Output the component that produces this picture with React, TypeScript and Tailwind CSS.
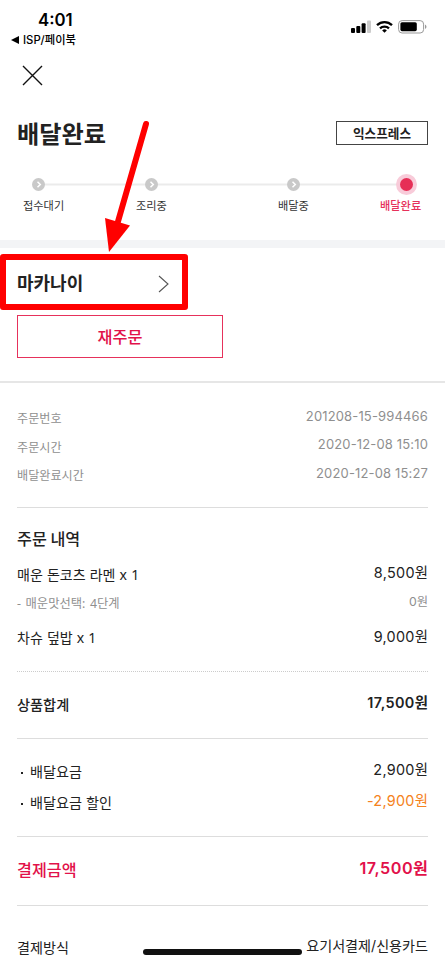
import type { ReactNode } from "react";

const KR = "font-['Noto_Sans_CJK_KR',sans-serif]";
const NUM = "font-['Inter','Noto_Sans_CJK_KR',sans-serif]";
const MENU = "pt-[2px] font-['Noto_Sans','Noto_Sans_CJK_KR',sans-serif]";

const ORDER_INFO = [
  { label: "주문번호", value: "201208-15-994466", height: "h-[29px]" },
  { label: "주문시간", value: "2020-12-08 15:10", height: "h-[28px]" },
  { label: "배달완료시간", value: "2020-12-08 15:27", height: "h-[29px]" },
];

export default function App() {
  return (
    <div className={`relative h-[963px] w-[445px] overflow-hidden bg-white text-[#222] ${KR}`}>
      <StatusBar />

      <header className="px-[17px]">
        <button className="mt-[15px] ml-[5px] block" aria-label="닫기">
          <svg width="21" height="21" viewBox="0 0 21 21" fill="none" stroke="#111" strokeWidth="1.4">
            <path d="M1 1l19 19M20 1L1 20" />
          </svg>
        </button>
        <div className="mt-[29px] flex h-[36px] items-center justify-between">
          <h1 className="text-[24.2px] leading-none font-bold">배달완료</h1>
          <span className="flex h-[24px] w-[92px] items-center justify-center border border-[#444] text-[12.6px] leading-none font-bold">
            익스프레스
          </span>
        </div>
      </header>

      <Stepper />

      <div className="h-[8px] bg-[#f3f4f6]" />

      <section className="h-[133px]">
        <div className="h-[62px] pt-[6px]">
          <button className="flex h-[56px] w-[188px] items-center justify-between rounded-[3px] border-6 border-[#ff0000] pr-[13px] pl-[11px]">
            <span className="text-[18px] leading-none font-bold">마카나이</span>
            <svg width="11" height="18" viewBox="0 0 11 18" fill="none" stroke="#555" strokeWidth="1.1" className="mt-[3px]">
              <path d="M1 1l9 8-9 8" />
            </svg>
          </button>
        </div>
        <button className="mt-[5px] ml-[17px] block h-[43px] w-[206px] border border-[#e6315b] text-[16.3px] leading-none font-medium text-[#e2114a]">
          재주문
        </button>
      </section>

      <div className="h-[2px] bg-[#e6e6e6]" />

      <main className="px-[17px]">
        <section className="border-b border-[#ddd] pt-[20px] pb-[18px]">
          {ORDER_INFO.map((row) => (
            <Row
              key={row.label}
              className={`${row.height} text-[#8f8f8f]`}
              label={<span className="pt-[2px] text-[12.1px]">{row.label}</span>}
              value={<span className="pb-[2px] text-[13px] tracking-[0.15px]">{row.value}</span>}
            />
          ))}
        </section>

        <section>
          <h2 className="flex h-[61px] items-center text-[16.2px] leading-none font-medium">주문 내역</h2>
          <Row
            className="h-[10px]"
            label={<span className={`text-[14px] [word-spacing:0.5px] ${MENU}`}>매운 돈코츠 라멘 x 1</span>}
            value={<Price>8,500원</Price>}
          />
          <Row
            className="h-[48px] text-[#8f8f8f]"
            label={<span className={`text-[12.3px] [word-spacing:1.4px] ${MENU}`}>- 매운맛선택: 4단계</span>}
            value={<span className="pb-[1px] text-[12.3px]">0원</span>}
          />
          <Row
            className="h-[20px]"
            label={<span className={`text-[14px] [word-spacing:0.5px] ${MENU}`}>차슈 덮밥 x 1</span>}
            value={<Price className="pt-[2px]">9,000원</Price>}
          />
        </section>

        <div className="mt-[24px] border-b border-dotted border-[#ccc]" />

        <section className="border-b border-[#ddd] pb-[2px]">
          <Row
            className="h-[64px] font-medium"
            label={<span className="text-[14.2px]">상품합계</span>}
            value={<span className="-mr-[0.4px] text-[14.4px] font-semibold tracking-[0.4px]">17,500원</span>}
          />
        </section>

        <section className="border-b border-[#ddd] pt-[16px] pb-[19px]">
          <Row className="h-[32px]" label={<Bullet>배달요금</Bullet>} value={<Price>2,900원</Price>} />
          <Row
            className="h-[30px]"
            label={<Bullet>배달요금 할인</Bullet>}
            value={<Price className="pb-[1px] text-[#f58220]">-2,900원</Price>}
          />
        </section>

        <section className="border-b border-[#ddd] pb-[3px]">
          <Row
            className="h-[65px] text-[#e2114a]"
            label={<span className="text-[16.2px] font-medium">결제금액</span>}
            value={<span className="-mr-[0.5px] pb-[1px] text-[16.2px] font-semibold tracking-[0.5px]">17,500원</span>}
          />
        </section>

        <Row
          className="mt-[23px] h-[36px]"
          label={<span className="text-[14.1px]">결제방식</span>}
          value={<span className="text-[14.1px]">요기서결제/신용카드</span>}
        />
      </main>

      {/* annotation arrow pointing at the store name */}
      <svg className="absolute top-0 left-0" width="200" height="260" viewBox="0 0 200 260">
        <path d="M146 124L117 225" stroke="#ff0000" strokeWidth="6" strokeLinecap="round" />
        <path d="M105 218L130 225.5L109 252Z" fill="#ff0000" />
      </svg>

      <div className="absolute top-[949px] left-[143px] h-[6px] w-[159px] rounded-full bg-[#111]" />
    </div>
  );
}

function Row({ label, value, className }: { label: ReactNode; value: ReactNode; className: string }) {
  return (
    <div className={`flex items-center justify-between leading-none whitespace-nowrap ${className}`}>
      <div className="flex items-center">{label}</div>
      <div className={`mb-[1px] flex items-center ${NUM}`}>{value}</div>
    </div>
  );
}

function Price({ children, className = "" }: { children: ReactNode; className?: string }) {
  return <span className={`-mr-[0.3px] text-[14.4px] tracking-[0.3px] ${className}`}>{children}</span>;
}

function Bullet({ children }: { children: ReactNode }) {
  return (
    <span className="flex items-center text-[14.1px]">
      <i className="mt-[3px] mr-[7px] ml-[4px] h-[2px] w-[2px] bg-[#222]" />
      <span className="[word-spacing:1px]">{children}</span>
    </span>
  );
}

function StatusBar() {
  return (
    <div className="flex h-[50px] justify-between font-['Inter','Noto_Sans_CJK_KR',sans-serif] text-black">
      <div className="pt-[12px] pl-[11px]">
        <div className="pl-[27px] text-[16.8px] leading-[16px] font-semibold">4:01</div>
        <div className="mt-[5px] flex items-center text-[11.3px] leading-[14px] font-medium">
          <svg width="8" height="8" viewBox="0 0 8 8" className="mr-[4px]">
            <path d="M0 4l8-4v8z" />
          </svg>
          ISP/페이북
        </div>
      </div>
      <div className="flex items-start gap-[5px] pt-[20px] pr-[18px]">
        <svg width="20" height="13" viewBox="0 0 20 13">
          <rect x="0" y="8" width="4" height="5" rx="1" />
          <rect x="5.3" y="6" width="4" height="7" rx="1" />
          <rect x="10.6" y="3.2" width="4" height="9.8" rx="1" />
          <rect x="16" y="0.5" width="4" height="12.5" rx="1" fill="#ccc" />
        </svg>
        <svg width="17" height="13" viewBox="0 0 17 13" fill="none" stroke="#000" strokeWidth="2.3">
          <path d="M1 5.2a10.8 10.8 0 0 1 15 0" />
          <path d="M4 8.4a6.5 6.5 0 0 1 9 0" />
          <path d="M8.5 12.8L6.2 10.4a3.4 3.4 0 0 1 4.6 0z" fill="#000" stroke="none" />
        </svg>
        <svg width="29" height="14" viewBox="0 0 29 14">
          <rect x="0.6" y="0.6" width="25" height="12.4" rx="3.5" fill="none" stroke="#999" />
          <rect x="2.4" y="2.2" width="16.4" height="9" rx="1.6" />
          <path d="M27 4.6c2 .8 2 3.6 0 4.4z" fill="#999" />
        </svg>
      </div>
    </div>
  );
}

function Stepper() {
  return (
    <div className="h-[89px] pt-[17px]">
      <svg width="445" height="30" viewBox="0 0 445 30" fill="none" className="block">
        <path d="M38 16.5H406" stroke="#ebebeb" strokeWidth="2" />
        {[38.5, 151.5, 293.5].map((x) => (
          <g key={x}>
            <circle cx={x} cy="16.5" r="6.5" fill="#c9c9c9" />
            <path d={`M${x - 1} 13.7l2.8 2.8-2.8 2.8`} stroke="#fff" strokeWidth="1.5" />
          </g>
        ))}
        <circle cx="406.5" cy="16.5" r="10.5" fill="#f8cbd9" />
        <circle cx="406.5" cy="16.5" r="6.5" fill="#e62e56" />
      </svg>
      <div className="flex pl-[23px] text-[11.2px] leading-[14px] text-[#333]">
        <span className="w-[113px]">접수대기</span>
        <span className="w-[142px]">조리중</span>
        <span className="w-[102px]">배달중</span>
        <span className="font-medium text-[#e6315b]">배달완료</span>
      </div>
    </div>
  );
}
